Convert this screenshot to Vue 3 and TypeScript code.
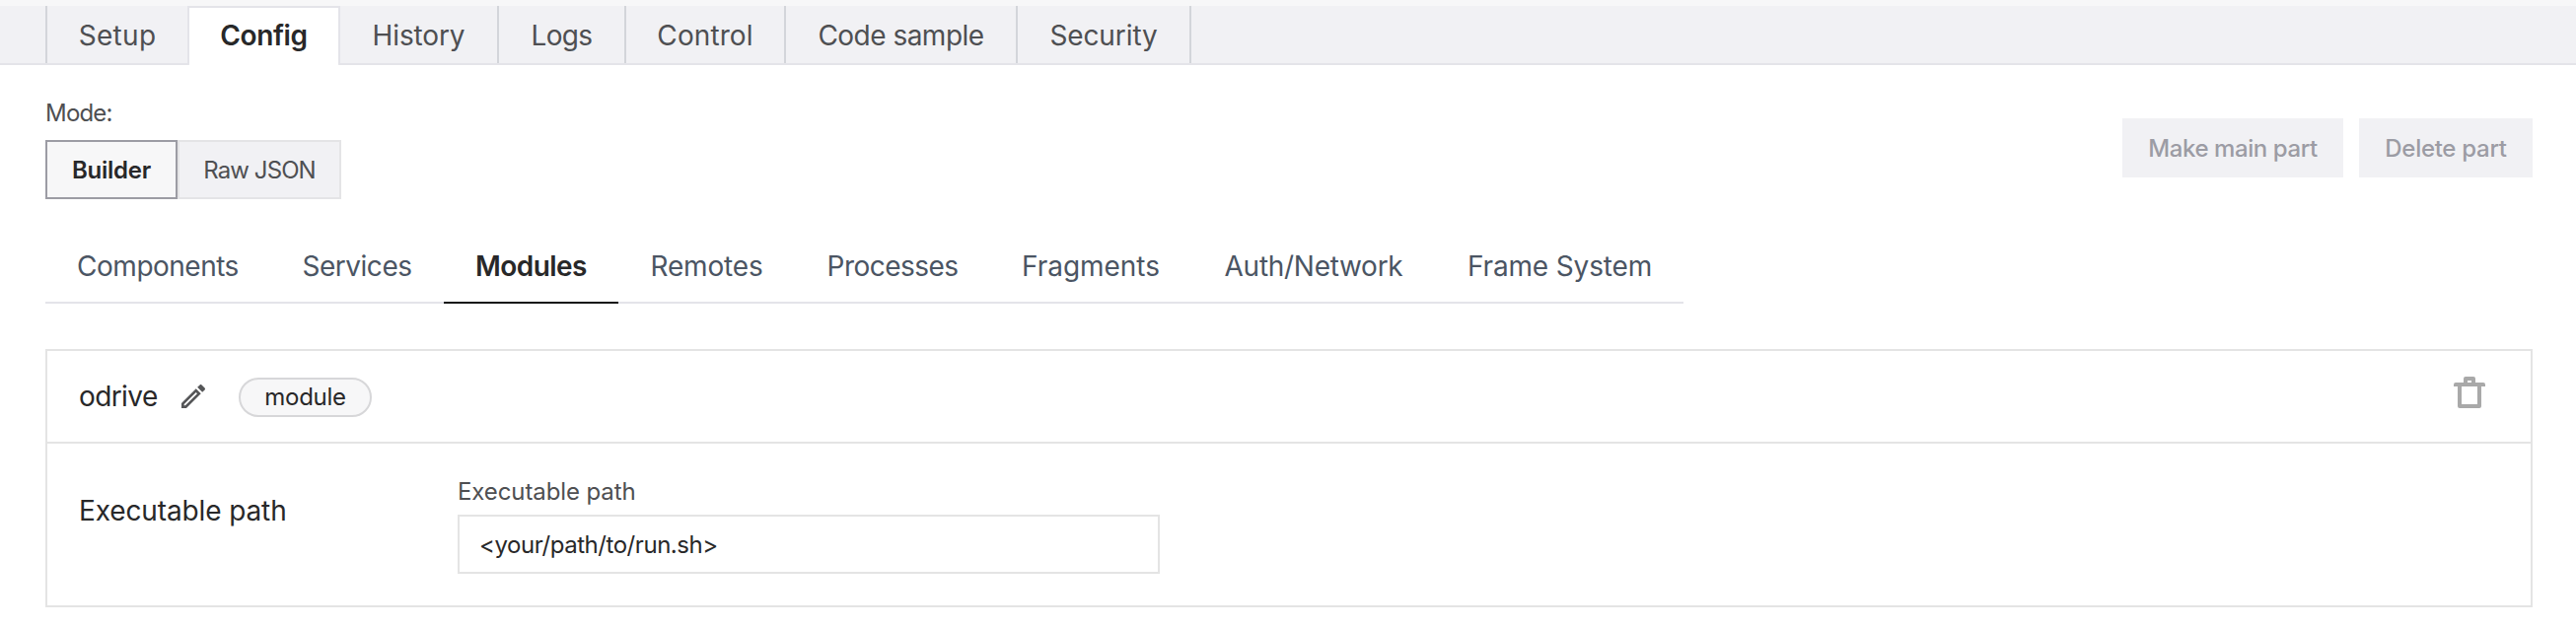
<script setup lang="ts">
import { ref } from 'vue'

interface Tab {
  label: string
  tracking: number
}

const tabs: Tab[] = [
  { label: 'Setup', tracking: 0.3 },
  { label: 'Config', tracking: -0.4 },
  { label: 'History', tracking: -0.12 },
  { label: 'Logs', tracking: -0.7 },
  { label: 'Control', tracking: 0.1 },
  { label: 'Code sample', tracking: -0.52 },
  { label: 'Security', tracking: -0.1 },
]

const sections: Tab[] = [
  { label: 'Components', tracking: -0.5 },
  { label: 'Services', tracking: -0.47 },
  { label: 'Modules', tracking: -0.56 },
  { label: 'Remotes', tracking: -0.18 },
  { label: 'Processes', tracking: -0.55 },
  { label: 'Fragments', tracking: -0.05 },
  { label: 'Auth/Network', tracking: -0.28 },
  { label: 'Frame System', tracking: -0.15 },
]

const activeTab = ref('Config')
const activeSection = ref('Modules')
const mode = ref<'builder' | 'json'>('builder')
const executablePath = ref('<your/path/to/run.sh>')
</script>

<template>
  <div class="page">
    <nav class="tabs">
      <button
        v-for="tab in tabs"
        :key="tab.label"
        class="tab"
        :class="{ active: tab.label === activeTab }"
        :style="{ letterSpacing: `${tab.tracking}px` }"
        @click="activeTab = tab.label"
      >{{ tab.label }}</button>
    </nav>

    <main class="content">
      <div class="toolbar">
        <div class="mode">
          <span class="mode-label">Mode:</span>
          <div class="toggle">
            <button class="toggle-item builder" :class="{ selected: mode === 'builder' }" @click="mode = 'builder'">Builder</button>
            <button class="toggle-item json" :class="{ selected: mode === 'json' }" @click="mode = 'json'">Raw JSON</button>
          </div>
        </div>
        <div class="actions">
          <button class="action make-main" disabled>Make main part</button>
          <button class="action delete-part" disabled>Delete part</button>
        </div>
      </div>

      <nav class="sections">
        <button
          v-for="section in sections"
          :key="section.label"
          class="section"
          :class="{ active: section.label === activeSection }"
          :style="{ letterSpacing: `${section.tracking}px` }"
          @click="activeSection = section.label"
        >{{ section.label }}</button>
      </nav>

      <section class="card">
        <header class="card-header">
          <span class="name">odrive</span>
          <svg class="pencil" viewBox="0 0 24 24" aria-hidden="true">
            <path d="M14.06,9L15,9.94L5.92,19H5V18.08L14.06,9M17.66,3C17.41,3 17.15,3.1 16.96,3.29L15.13,5.12L18.88,8.87L20.71,7.04C21.1,6.65 21.1,6 20.71,5.63L18.37,3.29C18.17,3.09 17.92,3 17.66,3M14.06,6.19L3,17.25V21H6.75L17.81,9.94L14.06,6.19Z" />
          </svg>
          <span class="pill">module</span>
          <svg class="trash" viewBox="0 0 32 32" aria-hidden="true">
            <path fill-rule="evenodd" d="M12 0H20Q22 0 22 2V6H30Q32 6 32 8V10H28V30Q28 32 26 32H6Q4 32 4 30V10H0V8Q0 6 2 6H10V2Q10 0 12 0ZM14 4V6H18V4ZM8 10V28H24V10Z" />
          </svg>
        </header>
        <div class="card-body">
          <h2 class="heading">Executable path</h2>
          <label class="field">
            <span class="field-label">Executable path</span>
            <input v-model="executablePath" class="input" type="text" spellcheck="false" />
          </label>
        </div>
      </section>
    </main>
  </div>
</template>

<style>
body {
  margin: 0;
  background: #fff;
}
</style>

<style scoped>
.page {
  box-sizing: border-box;
  height: 638px;
  font-family: Inter, "Liberation Sans", sans-serif;
  font-size: 28px;
  font-weight: 440;
  color: #282829;
  background: #fff;
  border-top: 6px solid #f7f7f8;
  overflow: hidden;
}

button,
input {
  box-sizing: border-box;
  margin: 0;
  padding: 0;
  border: 0;
  border-radius: 0;
  font: inherit;
  color: inherit;
  background: none;
}

.tabs {
  box-sizing: border-box;
  display: grid;
  grid-template-columns: 144px 155px 161px 129px 162px 235px 176px;
  height: 60px;
  padding-left: 46px;
  background: linear-gradient(#f1f1f4 58px, #e4e4e9 58px);
}

.tab {
  height: 58px;
  padding-top: 2px;
  line-height: 56px;
  color: #4e4f52;
  border-right: 2px solid #d3d5da;
  white-space: nowrap;
}

.tab:first-child {
  border-left: 2px solid #d3d5da;
  border-right: 0;
}

.tab.active {
  height: 60px;
  padding-top: 0;
  padding-bottom: 2px;
  font-weight: 620;
  color: #282829;
  background: #fff;
  border: 2px solid #e4e4e9;
  border-bottom: 0;
  border-radius: 0 0 2px 2px;
}

.content {
  padding: 32px 44px 0 46px;
}

.toolbar {
  display: flex;
  justify-content: space-between;
  align-items: center;
}

.mode {
  display: flex;
  flex-direction: column;
  gap: 10px;
}

.mode-label {
  font-size: 24px;
  line-height: 34px;
  letter-spacing: -0.8px;
  color: #4e4f52;
}

.toggle {
  display: grid;
  grid-template-columns: 134px 166px;
}

.toggle-item {
  height: 60px;
  font-size: 24px;
  color: #4e4f52;
  background: #f1f1f4;
  border: 2px solid #e4e4e6;
  white-space: nowrap;
}

.toggle-item.selected {
  font-weight: 620;
  color: #282829;
  background: #f7f7f8;
  border-color: #9c9ca4;
}

.builder {
  letter-spacing: -0.25px;
}

.json {
  letter-spacing: -0.9px;
}

.actions {
  display: grid;
  grid-template-columns: 224px 176px;
  gap: 16px;
}

.action {
  height: 60px;
  font-size: 24px;
  font-weight: 500;
  color: #9c9ca4;
  background: #f1f1f4;
  white-space: nowrap;
}

.make-main {
  letter-spacing: -0.43px;
}

.delete-part {
  letter-spacing: -0.29px;
}

.sections {
  display: grid;
  grid-template-columns: 228px 176px 177px 179px 198px 204px 248px 251px;
  width: max-content;
  margin-top: 50px;
}

.section {
  height: 56px;
  padding-bottom: 18px;
  line-height: 36px;
  color: #4b5563;
  border-bottom: 2px solid #e4e4e9;
  white-space: nowrap;
}

.section.active {
  font-weight: 600;
  color: #282829;
  border-bottom-color: #131414;
}

.card {
  margin-top: 46px;
  border: 2px solid #e4e4e4;
}

.card-header {
  display: flex;
  align-items: center;
  height: 92px;
  padding: 0 46px 0 32px;
  border-bottom: 2px solid #e4e4e4;
}

.name {
  width: 100px;
  letter-spacing: -0.6px;
}

.pencil {
  width: 32px;
  height: 32px;
  fill: #555658;
}

.pill {
  box-sizing: border-box;
  width: 135px;
  height: 40px;
  margin: 2px 0 0 30px;
  font-size: 24px;
  line-height: 36px;
  letter-spacing: -0.3px;
  text-align: center;
  background: #f7f7f8;
  border: 2px solid #d7d7d9;
  border-radius: 20px;
}

.trash {
  width: 32px;
  height: 32px;
  margin: 0 0 8px auto;
  fill: #a9a9a9;
}

.card-body {
  display: grid;
  grid-template-columns: 384px 712px;
  align-items: start;
  padding: 32px;
}

.heading {
  margin: 18px 0 0;
  font-size: 28px;
  font-weight: 440;
  line-height: 36px;
  letter-spacing: -0.12px;
}

.field {
  display: flex;
  flex-direction: column;
  gap: 6px;
}

.field-label {
  font-size: 24px;
  line-height: 34px;
  letter-spacing: -0.1px;
  color: #4e4f52;
}

.input {
  width: 712px;
  height: 60px;
  padding: 0 20px;
  font-size: 24px;
  letter-spacing: -0.45px;
  background: #fff;
  border: 2px solid #e4e4e4;
  outline: none;
}
</style>
